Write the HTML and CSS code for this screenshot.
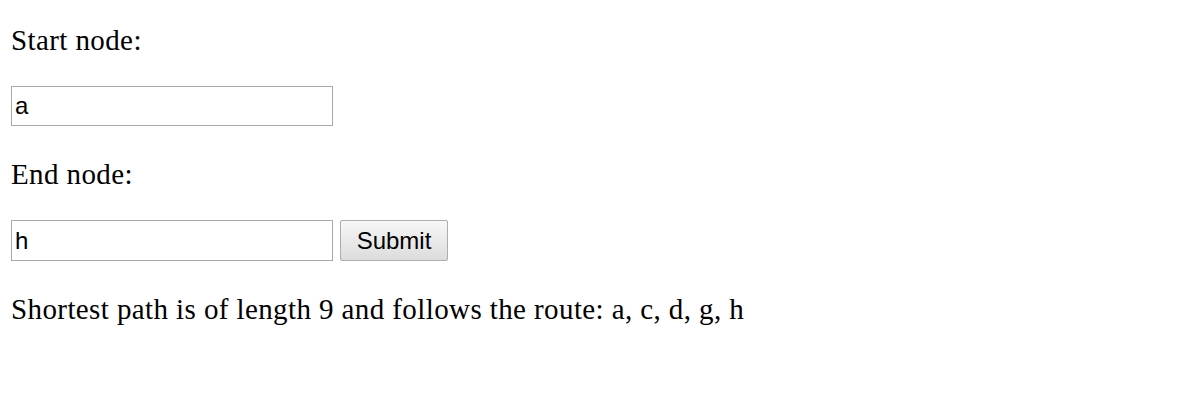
FILE: index.html
```html
<!DOCTYPE html>
<html>
<head>
<meta charset="utf-8">
<link rel="stylesheet" href="styles.css">
</head>
<body>
<form class="form">
  <p class="label">Start node:</p>
  <div class="row"><input class="field" type="text" value="a"></div>
  <p class="label">End node:</p>
  <div class="row"><input class="field field-tall" type="text" value="h"><button class="btn" type="button">Submit</button></div>
  <p class="label result">Shortest path is of length 9 and follows the route: a, c, d, g, h</p>
</form>
</body>
</html>
```
FILE: styles.css
```css
html, body {
  margin: 0;
  padding: 0;
  background: #ffffff;
}
body {
  padding: 24px 11px 0 11px;
  font-family: "Liberation Serif", "Times New Roman", serif;
  font-size: 29px;
  letter-spacing: 0.4px;
  color: #000;
}
.form {
  display: flex;
  flex-direction: column;
  align-items: flex-start;
}
.label {
  margin: 0;
  line-height: 32px;
  height: 32px;
}
.row {
  display: flex;
  align-items: flex-start;
  gap: 7px;
  margin: 30px 0 32px 0;
  letter-spacing: 0;
}
.field {
  box-sizing: border-box;
  width: 322px;
  height: 40px;
  margin: 0;
  border: 1px solid #a9a9a9;
  padding: 0 3px;
  font-family: "Liberation Sans", Arial, sans-serif;
  font-size: 24px;
  color: #000;
  background: #fff;
  outline: none;
}
.field-tall {
  height: 41px;
}
.btn {
  box-sizing: border-box;
  width: 108px;
  height: 41px;
  margin: 0;
  border: 1px solid #adadad;
  border-radius: 2px;
  background: linear-gradient(#f7f7f7, #dcdcdc);
  font-family: "Liberation Sans", Arial, sans-serif;
  font-size: 24px;
  color: #000;
  padding: 0;
}
.result {
  white-space: nowrap;
}
```
